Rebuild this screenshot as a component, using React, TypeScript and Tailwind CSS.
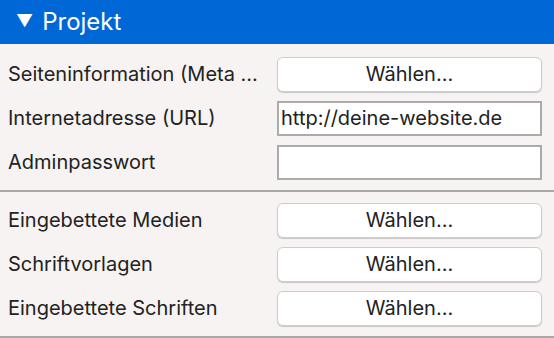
import React from "react";

type Row = { label: string; kind: "button" | "input"; value?: string };

const top: Row[] = [
  { label: "Seiteninformation (Meta ...", kind: "button" },
  { label: "Internetadresse (URL)", kind: "input", value: "http://deine-website.de" },
  { label: "Adminpasswort", kind: "input", value: "" },
];

const bottom: Row[] = [
  { label: "Eingebettete Medien", kind: "button" },
  { label: "Schriftvorlagen", kind: "button" },
  { label: "Eingebettete Schriften", kind: "button" },
];

function Field({ row }: { row: Row }) {
  return (
    <div className="flex h-[44px] items-center">
      <div className="w-[277px] shrink-0 pl-2 text-[20px] text-[#222] whitespace-nowrap">{row.label}</div>
      {row.kind === "button" ? (
        <button className="h-[35px] w-[265px] rounded-[6px] border border-[#cfcccb] bg-white text-[20px] text-[#222] shadow-[0_1px_1px_rgba(0,0,0,0.18)]">
          Wählen...
        </button>
      ) : (
        <input
          readOnly
          value={row.value}
          className="h-[35px] w-[265px] border-2 border-[#ababab] bg-white px-[2px] text-[20px] text-[#222] outline-none"
        />
      )}
    </div>
  );
}

export default function App() {
  return (
    <div className="h-[338px] w-[554px] overflow-hidden bg-[#f6f3f2]" style={{ fontFamily: "Inter, 'Noto Sans', sans-serif" }}>
      <div className="flex h-[44px] items-center bg-[#0067d7] pl-[16px] text-[24px] text-white">
        <span className="mr-[9px] text-[17px]">▼</span>
        <span>Projekt</span>
      </div>
      <div className="pt-[8px] pb-[6px]">
        {top.map(r => <Field key={r.label} row={r} />)}
      </div>
      <div className="h-[2px] bg-[#aaa8a7]" />
      <div className="pt-[6px] pb-[6px]">
        {bottom.map(r => <Field key={r.label} row={r} />)}
      </div>
      <div className="h-[2px] bg-[#aaa8a7]" />
    </div>
  );
}
